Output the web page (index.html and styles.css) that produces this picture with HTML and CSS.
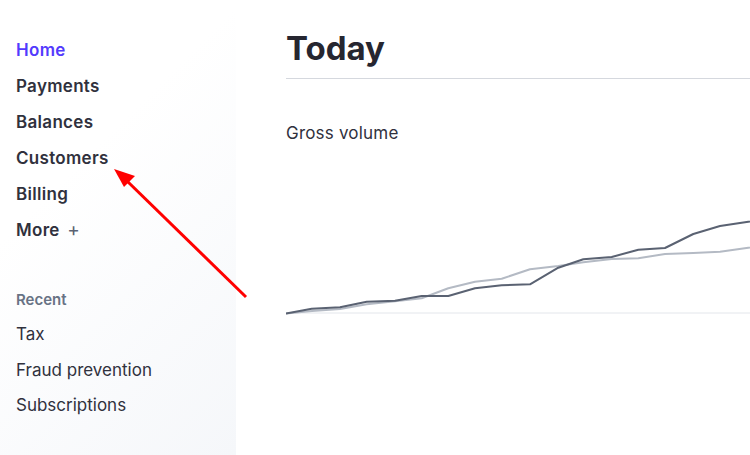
FILE: index.html
```html
<!DOCTYPE html>
<html>
<head>
<meta charset="utf-8">
<link rel="stylesheet" href="styles.css">
</head>
<body>
<div class="app">
  <nav class="sidebar">
    <ul class="nav">
      <li class="nav-item active">Home</li>
      <li class="nav-item">Payments</li>
      <li class="nav-item">Balances</li>
      <li class="nav-item">Customers</li>
      <li class="nav-item">Billing</li>
      <li class="nav-item">More <span class="plus">+</span></li>
    </ul>
    <div class="section-title">Recent</div>
    <ul class="recent">
      <li class="recent-item">Tax</li>
      <li class="recent-item">Fraud prevention</li>
      <li class="recent-item">Subscriptions</li>
    </ul>
  </nav>
  <main class="main">
    <h1 class="title">Today</h1>
    <div class="card-label">Gross volume</div>
    <svg class="chart" width="520" height="120" viewBox="0 0 520 120">
      <line x1="0" y1="112" x2="520" y2="112" stroke="#e3e6eb" stroke-width="1"/>
      <polyline fill="none" stroke="#b4bac4" stroke-width="2" stroke-linejoin="round"
        points="0,112.5 26,110 54,108 80.7,103.3 109,100.3 135.7,97.3 162.3,87.3 189,80.7 215.7,77.7 244,68.3 272.3,65 297.3,61.3 325.7,58 352.3,57.3 379,53 407.3,52 434,50.7 462.3,46.7 490,43"/>
      <polyline fill="none" stroke="#5a6272" stroke-width="2" stroke-linejoin="round"
        points="0,112.5 25.7,107.7 54,106.3 80.7,100.7 109,99.7 135.7,95 162.3,95 189,87.3 215.7,84.3 244,83.3 272.3,66.7 297.3,58.3 325.7,56 352.3,48.7 379,47 407.3,33 434,25 462.3,20.7 490,17"/>
    </svg>
  </main>
  <svg class="arrow" width="750" height="455" viewBox="0 0 750 455">
    <line x1="246" y1="297" x2="126" y2="180" stroke="#ff0000" stroke-width="3"/>
    <polygon points="114,169 135,176 124,187" fill="#ff0000"/>
  </svg>
</div>
</body>
</html>
```
FILE: styles.css
```css
html, body {
  margin: 0;
  padding: 0;
  background: #ffffff;
}
body {
  font-family: Inter, "Noto Sans", "Liberation Sans", sans-serif;
  color: #30313d;
}
.app {
  position: relative;
  display: flex;
  width: 750px;
  height: 455px;
  overflow: hidden;
}
.sidebar {
  width: 236px;
  flex: none;
  box-sizing: border-box;
  padding: 38px 0 0 16px;
  background: linear-gradient(135deg, #ffffff 35%, #f5f7fa 100%);
}
.nav, .recent {
  list-style: none;
  margin: 0;
  padding: 0;
}
.nav-item {
  font-size: 17px;
  font-weight: 600;
  line-height: 24px;
  margin-bottom: 12px;
  letter-spacing: 0.3px;
  color: #30313d;
}
.nav-item.active {
  color: #533afd;
}
.plus {
  font-size: 19px;
  font-weight: 400;
  color: #5a6272;
  margin-left: 3px;
}
.section-title {
  margin-top: 48px;
  font-size: 15px;
  font-weight: 600;
  color: #687385;
  line-height: 20px;
  margin-bottom: 12px;
}
.recent-item {
  font-size: 17px;
  font-weight: 400;
  line-height: 24px;
  margin-bottom: 11.5px;
  color: #30313d;
}
.main {
  flex: 1;
  padding-left: 50px;
  min-width: 0;
}
.title {
  margin: 28px 0 0 0;
  font-size: 33px;
  font-weight: 700;
  line-height: 40px;
  color: #262630;
  padding-bottom: 10px;
  border-bottom: 1px solid #d5d8de;
}
.card-label {
  margin-top: 43px;
  font-size: 17px;
  letter-spacing: 0.2px;
  line-height: 22px;
  color: #30313d;
}
.chart {
  display: block;
  margin-top: 57px;
}
.arrow {
  position: absolute;
  left: 0;
  top: 0;
  pointer-events: none;
}
```
